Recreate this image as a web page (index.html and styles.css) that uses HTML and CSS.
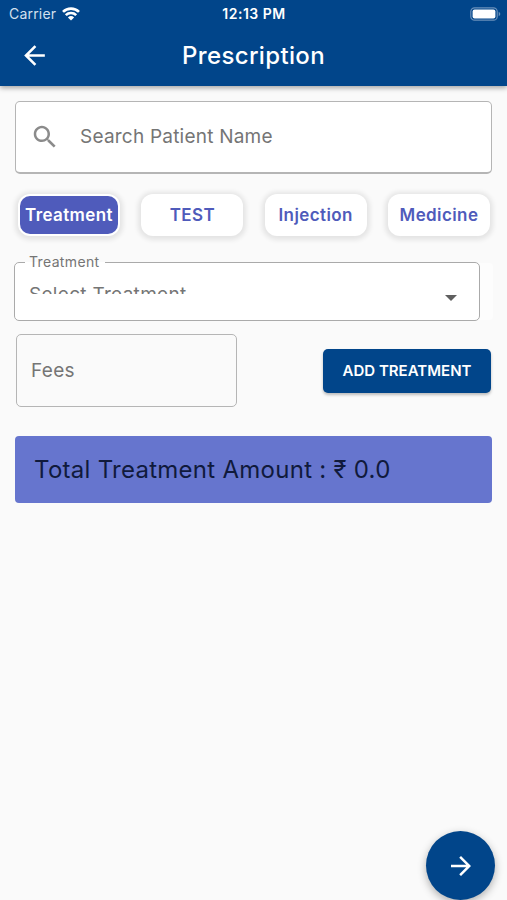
FILE: index.html
```html
<!DOCTYPE html>
<html lang="en">
<head>
    <meta charset="UTF-8">
    <title>Prescription</title>
    <link rel="stylesheet" href="styles.css">
</head>
<body>
<header class="header">
    <div class="status">
        <div class="carrier">
            <span>Carrier</span>
            <svg width="18" height="14" viewBox="0 0 18 14" fill="none" stroke="#fff" stroke-width="2.7">
                <path d="M1 4.9a11.5 11.5 0 0 1 16 0"/>
                <path d="M3.8 8.1a7.5 7.5 0 0 1 10.4 0"/>
                <path d="M9 13.6L5.9 10.5a4.5 4.5 0 0 1 6.2 0z" fill="#fff" stroke="none"/>
            </svg>
        </div>
        <span class="time">12:13 PM</span>
        <svg class="battery" width="31" height="14" viewBox="0 0 31 14">
            <rect x=".8" y=".8" width="26.4" height="12.4" rx="3.8" fill="none" stroke="#6a90ba" stroke-width="1.2"/>
            <rect x="2.6" y="2.4" width="22.8" height="9.2" rx="2" fill="#fff"/>
            <path d="M28.7 4.8q1.6.8 1.6 2.2t-1.6 2.2z" fill="#6a90ba"/>
        </svg>
    </div>
    <div class="bar">
        <svg class="back" width="31" height="31" viewBox="0 0 24 24" fill="#fff">
            <path d="M20 11H7.83l5.59-5.59L12 4l-8 8 8 8 1.41-1.41L7.83 13H20v-2z"/>
        </svg>
        <h1>Prescription</h1>
    </div>
</header>
<main class="content">
    <div class="search">
        <svg width="30" height="30" viewBox="0 0 24 24" fill="#8b8b8b">
            <path d="M15.5 14h-.79l-.28-.27C15.41 12.59 16 11.11 16 9.5 16 5.91 13.09 3 9.5 3S3 5.91 3 9.5 5.91 16 9.5 16c1.61 0 3.09-.59 4.23-1.57l.27.28v.79l5 4.99L20.49 19l-4.99-5zm-6 0C7.01 14 5 11.99 5 9.5S7.01 5 9.5 5 14 7.01 14 9.5 11.99 14 9.5 14z"/>
        </svg>
        <span>Search Patient Name</span>
    </div>
    <div class="tabs">
        <div class="tab active"><span>Treatment</span></div>
        <div class="tab"><span>TEST</span></div>
        <div class="tab"><span>Injection</span></div>
        <div class="tab"><span>Medicine</span></div>
    </div>
    <div class="select-wrap">
        <fieldset class="select">
            <legend>Treatment</legend>
            <div class="select-row">
                <div class="value">Select Treatment</div>
                <svg width="12" height="6" viewBox="0 0 12 6" fill="#5f5f5f"><path d="M0 0h12L6 6z"/></svg>
            </div>
        </fieldset>
    </div>
    <div class="fees-row">
        <div class="fees">Fees</div>
        <div class="add">ADD TREATMENT</div>
    </div>
    <div class="total">Total Treatment Amount : ₹ 0.0</div>
</main>
<div class="fab">
    <svg width="30" height="30" viewBox="0 0 24 24" fill="#fff">
        <path d="M4 11h12.17l-5.59-5.59L12 4l8 8-8 8-1.41-1.41L16.17 13H4v-2z"/>
    </svg>
</div>
</body>
</html>
```
FILE: styles.css
```css
*{
    margin: 0;
    padding: 0;
    box-sizing: border-box;
}
body{
    height: 900px;
    overflow: hidden;
    background: #fafafa;
    font-family: Inter, "Noto Sans", sans-serif;
    color: #757575;
}
svg{
    display: block;
    flex: none;
}
.header{
    height: 86px;
    background: #01458a;
    color: #fff;
    box-shadow: 0 2px 5px rgba(0,0,0,.35);
}
.status{
    height: 27px;
    display: grid;
    grid-template-columns: 1fr auto 1fr;
    align-items: center;
    padding: 0 6px 0 9px;
    font-size: 14px;
}
.carrier{
    display: flex;
    align-items: center;
    gap: 6px;
    color: #d3e0ee;
    letter-spacing: .2px;
}
.time{
    margin-left: -2px;
    font-size: 14px;
    font-weight: 600;
    letter-spacing: .5px;
}
.battery{
    justify-self: end;
}
.bar{
    height: 58px;
    display: grid;
    grid-template-columns: 32px 1fr 32px;
    align-items: center;
    padding: 0 19px 1px;
}
.bar h1{
    font-size: 24px;
    font-weight: 500;
    letter-spacing: .35px;
    text-align: center;
}
.content{
    padding: 15px 15px 0;
}
.search{
    height: 73px;
    display: flex;
    align-items: center;
    padding: 0 14px 2px;
    gap: 20px;
    background: #fff;
    border: 1.5px solid #b5b5b5;
    border-bottom-width: 2px;
    border-radius: 5px;
    font-size: 19px;
    letter-spacing: .22px;
}
.search svg{
    margin-top: 2px;
}
.tabs{
    display: flex;
    justify-content: space-between;
    margin: 20px 2px 0 3px;
}
.tab{
    width: 102px;
    height: 42px;
    padding: 2px;
    background: #fff;
    border-radius: 12px;
    box-shadow: 0 1px 5px 3px rgba(0,0,0,.09);
    color: #4f5bbb;
    font-size: 17px;
    font-weight: 600;
    letter-spacing: .4px;
}
.tab span{
    height: 100%;
    display: flex;
    align-items: center;
    justify-content: center;
    border-radius: 10px;
}
.active{
    color: #fff;
}
.active span{
    background: #4f5bbb;
}
.select-wrap{
    height: 68px;
    margin: 17px 0 0 -1px;
    padding-right: 12px;
}
.select{
    height: 68px;
    min-width: 0;
    padding: 0 22px 0 14px;
    border: 1.5px solid #aaa;
    border-radius: 5px;
    background: #fff;
    box-shadow: 14px 0 0 -1px #fdfdfd;
}
.select legend{
    height: 18px;
    margin-left: -4px;
    padding: 0 6px 0 4px;
    font-size: 14px;
    line-height: 18px;
    letter-spacing: .35px;
}
.select-row{
    display: flex;
    justify-content: space-between;
    align-items: flex-start;
    padding-top: 15px;
}
.select-row svg{
    margin-top: 9px;
}
/* the value is cut off at mid height */
.value{
    height: 8px;
    overflow: hidden;
    font-size: 19px;
    line-height: 18px;
    letter-spacing: .3px;
}
.fees-row{
    display: flex;
    justify-content: space-between;
    align-items: center;
    margin: 13px 1px 0;
}
.fees{
    width: 221px;
    height: 73px;
    padding: 0 14px;
    border: 1.5px solid #b5b5b5;
    border-radius: 5px;
    font-size: 19px;
    line-height: 71px;
    letter-spacing: .3px;
}
.add{
    width: 168px;
    height: 44px;
    border-radius: 5px;
    background: #01458a;
    box-shadow: 0 2px 3px rgba(0,0,0,.25);
    color: #fff;
    font-size: 15px;
    font-weight: 600;
    line-height: 44px;
    text-align: center;
}
.total{
    height: 67px;
    margin-top: 29px;
    padding-left: 19px;
    border-radius: 4px;
    background: #6675ce;
    color: #101a3c;
    font-size: 24px;
    line-height: 67px;
    letter-spacing: .27px;
}
.fab{
    position: absolute;
    right: 12px;
    bottom: 0;
    width: 69px;
    height: 69px;
    display: flex;
    align-items: center;
    justify-content: center;
    border-radius: 50%;
    background: #01458a;
    box-shadow: 0 3px 8px rgba(0,0,0,.3);
}
```
